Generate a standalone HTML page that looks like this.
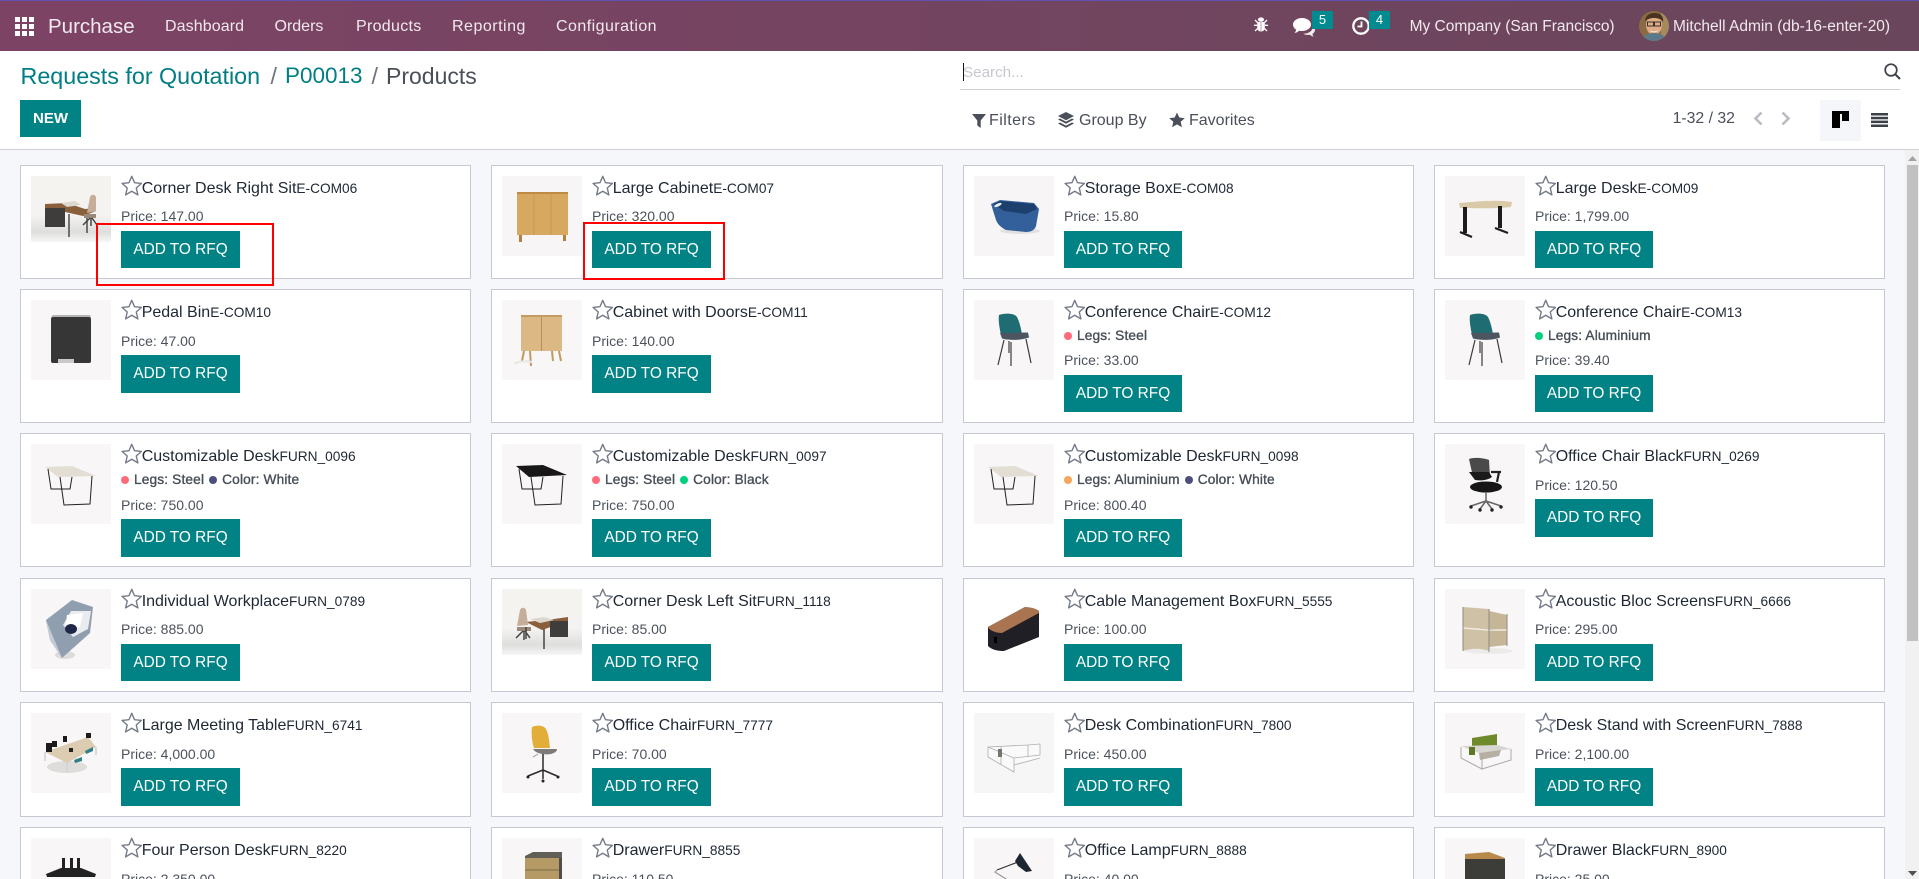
<!DOCTYPE html>
<html lang="en">
<head>
<meta charset="utf-8">
<title>Products</title>
<style>
*{box-sizing:border-box}
html,body{margin:0;padding:0;width:1919px;height:879px;overflow:hidden;background:#f6f7fb;font-family:"Liberation Sans",sans-serif;color:#212529}
#root{position:relative;width:1919px;height:879px;overflow:hidden;background:#f6f7fb}
.a{position:absolute;white-space:nowrap}
#nav{position:absolute;left:0;top:0;width:1919px;height:51px;background:linear-gradient(90deg,#7d4365,#69465b);border-top:1px solid #5f51b3}
.m{position:absolute;top:13px;line-height:26px;font-size:16px;color:#f1e9ee;white-space:nowrap}
.badge{position:absolute;top:11px;height:18px;background:#018a8f;color:#fff;font-size:13px;line-height:17px;text-align:center}
#cp{position:absolute;left:0;top:51px;width:1919px;height:99px;background:#fff;border-bottom:1px solid #cfd0d4}
.f{font-size:16px;color:#4a4f59;line-height:22px;top:110px}
.card{position:absolute;background:#fff;border:1px solid #c6c8d3;overflow:hidden}
.c1{left:20px;width:451px}.c2{left:491px;width:452px}.c3{left:963px;width:451px}.c4{left:1434px;width:451px}
.r1{top:165px;height:114px}.r2{top:289px;height:134px}.r3{top:433px;height:134px}.r4{top:578px;height:114px}.r5{top:702px;height:115px}.r6{top:827px;height:52px;border-bottom:0}
.im{position:absolute;left:10px;top:10px;width:80px;height:80px;display:block}
.st{position:absolute;left:99.5px;top:9px;width:21.5px;height:21.5px}
.t{position:absolute;left:120.7px;top:11px;line-height:24px;font-size:16px;color:#1e2733;white-space:nowrap}
.t small{font-size:13.7px;color:#1e2733}
.p{position:absolute;left:100px;top:41px;line-height:20px;font-size:14px;color:#4c525c;white-space:nowrap}
.r6 .p{height:10px;overflow:hidden}
.r6 .im{height:41px}
.b{position:absolute;left:100px;top:65px;width:119px;height:38px;background:#018284;color:#fff;font-size:15.4px;line-height:38px;text-align:center;white-space:nowrap}
.c3 .b,.c4 .b{width:118px}
.r1 .b,.r4 .b{height:37px;line-height:37px}
.r1 .p,.r4 .p{top:40px}
.tg .p{top:61px}.tg .b{top:85px}
.r2.tg .b{height:37px;line-height:37px}
.r2.tg .p{top:60px}
.l{position:absolute;left:100px;top:36px;line-height:20px;font-size:13.7px;letter-spacing:.15px;color:#474d57;white-space:nowrap;-webkit-text-stroke:.35px #474d57}
.l i{display:inline-block;width:8px;height:8px;border-radius:50%;margin-right:5px;vertical-align:0}
.l span+i{margin-left:5px}
.pk{background:#ff6b7a}.nv{background:#4c4f7a}.gr{background:#00d17e}.or{background:#f5a55c}
.red{position:absolute;border:2px solid #f00;pointer-events:none}
</style>
</head>
<body>
<div id="root">
<svg width="0" height="0" style="position:absolute">
<symbol id="star" viewBox="0 0 20 20"><path d="M10 1.2l2.6 6 6.4.6-4.8 4.3 1.5 6.4L10 15.1 4.3 18.5l1.5-6.4L1 7.8l6.4-.6z" fill="none" stroke="#757a88" stroke-width="1.3" stroke-linejoin="round"/></symbol>
</svg>

<div id="nav">
  <svg class="a" style="left:15px;top:16px" width="19" height="19" viewBox="0 0 19 19" fill="#fff"><rect x="0" y="0" width="5" height="5"/><rect x="7" y="0" width="5" height="5"/><rect x="14" y="0" width="5" height="5"/><rect x="0" y="7" width="5" height="5"/><rect x="7" y="7" width="5" height="5"/><rect x="14" y="7" width="5" height="5"/><rect x="0" y="14" width="5" height="5"/><rect x="7" y="14" width="5" height="5"/><rect x="14" y="14" width="5" height="5"/></svg>
  <div class="m" style="left:48px;font-size:20.5px">Purchase</div>
  <div class="m" style="left:165px;letter-spacing:.1px">Dashboard</div>
  <div class="m" style="left:274.5px">Orders</div>
  <div class="m" style="left:356px;letter-spacing:.3px">Products</div>
  <div class="m" style="left:452px;letter-spacing:.5px">Reporting</div>
  <div class="m" style="left:556px;letter-spacing:.45px">Configuration</div>

  <svg class="a" style="left:1254px;top:16px" width="14" height="15" viewBox="0 0 14 15" fill="#fff"><ellipse cx="7" cy="2.6" rx="3" ry="2.2"/><path d="M3.2 5h7.6v5.5C10.8 13 9 14.6 7 14.6S3.2 13 3.2 10.5z"/><path d="M1 3l2.5 2.5M13 3l-2.5 2.5M0 8.3h3.2M14 8.3h-3.2M1 14l2.6-2.6M13 14l-2.6-2.6" stroke="#fff" stroke-width="1.3" fill="none"/><rect x="6.5" y="5" width="1" height="9.5" fill="#c9a"/></svg>
  <svg class="a" style="left:1293px;top:16px" width="22" height="20" viewBox="0 0 22 20" fill="#fff"><path d="M9 1c5 0 9 2.900 9 6.500S14 14 9 14c-1 0-2-.1-2.900-.3C4.800 15 3 15.800 1.500 16c.9-1 1.500-2.200 1.600-3.400C1.200 11.400 0 9.600 0 7.500 0 3.900 4 1 9 1z"/><path d="M19.500 8.500c1.600 1.100 2.500 2.600 2.500 4.200 0 1.700-1 3.200-2.600 4.300.2 1 .7 1.800 1.300 2.500-1.400-.2-2.800-.8-3.800-1.800-.7.2-1.400.2-2.200.2-1.700 0-3.200-.4-4.500-1.200 5.500.2 10.500-3.200 9.300-8.200z" opacity=".9"/></svg>
  <div class="badge" style="left:1312px;width:21px;top:10px">5</div>
  <svg class="a" style="left:1352px;top:16px" width="18" height="18" viewBox="0 0 18 18"><circle cx="9" cy="9" r="7.700" fill="none" stroke="#fff" stroke-width="2.300"/><path d="M9.500 4.500v5H5.500" fill="none" stroke="#fff" stroke-width="1.800"/></svg>
  <div class="badge" style="left:1369px;width:21px;top:10px">4</div>
  <div class="m" style="left:1409.6px;font-size:15.5px">My Company (San Francisco)</div>
  <svg class="a" style="left:1639px;top:10px" width="30" height="30" viewBox="0 0 30 30"><clipPath id="av"><circle cx="15" cy="15" r="15"/></clipPath><g clip-path="url(#av)"><rect width="30" height="30" fill="#8a6a42"/><rect x="22" y="0" width="8" height="30" fill="#a58a5b"/><ellipse cx="15" cy="14" rx="8" ry="10" fill="#e0ab85"/><path d="M6 10C7 3 12 2 16 2c5 0 9 3 8 9-2-3-5-4-9-4S9 8 6 10z" fill="#4a3420"/><rect x="8.500" y="11" width="6" height="4" fill="none" stroke="#333" stroke-width="1"/><rect x="15.500" y="11" width="6" height="4" fill="none" stroke="#333" stroke-width="1"/><path d="M3 30c1-6 6-8 12-8s11 2 12 8z" fill="#5d7a8a"/><path d="M11 19c2 2 6 2 8 0-1 3-7 3-8 0z" fill="#fff"/></g></svg>
  <div class="m" style="left:1673px;font-size:15.500px">Mitchell Admin (db-16-enter-20)</div>
</div>

<div id="cp"></div>
<div class="a" style="left:20.5px;top:60px;font-size:23.300px;line-height:32px;color:#017e84">Requests for Quotation</div>
<div class="a" style="left:270.5px;top:60px;font-size:23.300px;line-height:32px;color:#6c737d">/</div>
<div class="a" style="left:285px;top:60px;font-size:22.5px;line-height:32px;color:#017e84">P00013</div>
<div class="a" style="left:371.5px;top:60px;font-size:23.300px;line-height:32px;color:#6c737d">/</div>
<div class="a" style="left:386px;top:60px;font-size:23px;line-height:32px;color:#4a4f59">Products</div>
<div class="a" style="left:20px;top:100px;width:61px;height:37px;background:#018284;color:#fff;font-size:15px;font-weight:bold;line-height:37px;text-align:center">NEW</div>

<div class="a" style="left:963px;top:63px;width:1px;height:18px;background:#111"></div>
<div class="a" style="left:963px;top:62px;font-size:15.2px;line-height:22px;color:#c5c8ce">Search...</div>
<div class="a" style="left:960px;top:89px;width:940px;height:1px;background:#cfd0d4"></div>
<svg class="a" style="left:1884px;top:63px" width="17" height="17" viewBox="0 0 17 17"><circle cx="7" cy="7" r="5.800" fill="none" stroke="#3c4048" stroke-width="1.700"/><path d="M11 11l5 5" stroke="#3c4048" stroke-width="2"/></svg>

<svg class="a" style="left:972px;top:113px" width="14" height="15" viewBox="0 0 14 15" fill="#4a4f59"><path d="M0 1h14L8.700 7.500V15L5.300 12.500V7.500z"/></svg>
<div class="a f" style="left:989px;letter-spacing:.45px">Filters</div>
<svg class="a" style="left:1058px;top:112px" width="16" height="17" viewBox="0 0 16 17" fill="#4a4f59"><path d="M8 0l8 4-8 4.200L0 4z"/><path d="M0 7.500l2-1 6 3.100 6-3.100 2 1-8 4.200zM0 11.500l2-1 6 3.100 6-3.100 2 1L8 15.700z"/></svg>
<div class="a f" style="left:1079px">Group By</div>
<svg class="a" style="left:1169px;top:112px" width="16" height="16" viewBox="0 0 16 16" fill="#4a4f59"><path d="M8 .5l2.300 5 5.500.6-4.100 3.700 1.200 5.400L8 12.400 3.100 15.200l1.200-5.400L.2 6.100l5.500-.6z"/></svg>
<div class="a f" style="left:1189px">Favorites</div>

<div class="a" style="left:1672.600px;top:108px;font-size:15.8px;line-height:22px;color:#4a4f59">1-32 / 32</div>
<svg class="a" style="left:1753px;top:111px" width="10" height="15" viewBox="0 0 10 15"><path d="M8.500 1.500L2.500 7.500l6 6" fill="none" stroke="#b9bcc2" stroke-width="2.600"/></svg>
<svg class="a" style="left:1781px;top:111px" width="10" height="15" viewBox="0 0 10 15"><path d="M1.500 1.500l6 6-6 6" fill="none" stroke="#b9bcc2" stroke-width="2.600"/></svg>
<div class="a" style="left:1820px;top:100px;width:41px;height:41px;background:#f5f6fa"></div>
<svg class="a" style="left:1832px;top:111px" width="17" height="17" viewBox="0 0 17 17" fill="#000"><rect width="17" height="3"/><rect y="3" width="8" height="14"/><rect x="10" y="3" width="7" height="7"/></svg>
<svg class="a" style="left:1871px;top:113px" width="17" height="14" viewBox="0 0 17 14" fill="#3c4048"><rect width="17" height="2.500"/><rect y="3.800" width="17" height="2.500"/><rect y="7.600" width="17" height="2.500"/><rect y="11.500" width="17" height="2.500"/></svg>

<!-- scrollbar -->
<div class="a" style="left:1905px;top:150px;width:14px;height:729px;background:#f1f1f1"></div>
<div class="a" style="left:1907px;top:165px;width:11px;height:476px;background:#c1c1c1"></div>
<svg class="a" style="left:1907px;top:155px" width="11" height="7" viewBox="0 0 11 7"><path d="M5.500 1L10 6H1z" fill="#a3a3a3"/></svg>
<svg class="a" style="left:1907px;top:870px" width="11" height="7" viewBox="0 0 11 7"><path d="M5.500 6L10 1H1z" fill="#505050"/></svg>

<!-- ROW 1 -->
<div class="card c1 r1">
<svg class="im" style="height:66px" viewBox="0 0 80 66"><defs><linearGradient id="g1" x1="0" y1="0" x2="0" y2="1"><stop offset="0" stop-color="#f4f3f0"/><stop offset=".6" stop-color="#f4f3f1"/><stop offset=".85" stop-color="#dededc"/><stop offset="1" stop-color="#f7f7f7"/></linearGradient></defs><rect width="80" height="66" fill="url(#g1)"/><path d="M14 28l22-1 18 6 11-1v3L52 40 34 36 14 32z" fill="#8a5f3c"/><rect x="14" y="32" width="20" height="19" fill="#3f3d3b"/><path d="M38 38v23M56 38v19" stroke="#4a4a4a" stroke-width="1.500"/><path d="M56 37l3-16c1-3 5-3 6 0v14z" fill="#c4ad99"/><path d="M53 38h12v4H53z" fill="#9a8878"/><path d="M59 42l-7 7M61 42l5 7M60 42v8" stroke="#444" stroke-width="1.500"/><path d="M30 27l14-2 6 4-14 2z" fill="#dcd8d0"/></svg>
<svg class="st"><use href="#star"/></svg>
<div class="t">Corner Desk Right Sit<small>E-COM06</small></div><div class="p">Price: 147.00</div><div class="b">ADD TO RFQ</div></div>

<div class="card c2 r1">
<svg class="im" viewBox="0 0 80 80"><rect width="80" height="80" fill="#f7f5f5"/><path d="M15 16h51v43H15z" fill="#d6a860"/><path d="M32 17v42M49 17v42" stroke="#c39350" stroke-width=".8"/><path d="M15 16h51v2H15z" fill="#bf8a45"/><path d="M17 59h3v7h-3zM61 59h3v6h-3z" fill="#b4803e"/></svg>
<svg class="st"><use href="#star"/></svg>
<div class="t">Large Cabinet<small>E-COM07</small></div><div class="p">Price: 320.00</div><div class="b">ADD TO RFQ</div></div>

<div class="card c3 r1">
<svg class="im" viewBox="0 0 80 80"><rect width="80" height="80" fill="#f7f5f5"/><ellipse cx="46" cy="55" rx="20" ry="3" fill="#e2e0e0"/><path d="M17 28l9-4 34 3 5 6-3 17q-2 6-10 6l-20-2q-8-4-10-10z" fill="#33609a"/><path d="M19 28l8-3 33 3 3 5-11 5-22-3z" fill="#1c3f6e"/><ellipse cx="24" cy="29" rx="4" ry="1.500" fill="#e9edf3" transform="rotate(-25 24 29)"/></svg>
<svg class="st"><use href="#star"/></svg>
<div class="t">Storage Box<small>E-COM08</small></div><div class="p">Price: 15.80</div><div class="b">ADD TO RFQ</div></div>

<div class="card c4 r1">
<svg class="im" viewBox="0 0 80 80"><rect width="80" height="80" fill="#f7f5f5"/><path d="M14 27c14-1 38-4 53-1l-1 5c-17 2-36 1-51 1z" fill="#d9c9a8"/><path d="M18 31h4v26h-4zM53 30h4v22h-4z" fill="#1d1d1d"/><path d="M15 56l12 5M50 52l13 5" stroke="#1d1d1d" stroke-width="2.200"/></svg>
<svg class="st"><use href="#star"/></svg>
<div class="t">Large Desk<small>E-COM09</small></div><div class="p">Price: 1,799.00</div><div class="b">ADD TO RFQ</div></div>

<!-- ROW 2 -->
<div class="card c1 r2">
<svg class="im" viewBox="0 0 80 80"><rect width="80" height="80" fill="#f8f6f6"/><rect x="20" y="17" width="40" height="46" rx="2" fill="#363636"/><path d="M20 17l2-2h37l1 2z" fill="#b5b5b5"/><rect x="27" y="59" width="16" height="4" fill="#c9c9c9"/></svg>
<svg class="st"><use href="#star"/></svg>
<div class="t">Pedal Bin<small>E-COM10</small></div><div class="p">Price: 47.00</div><div class="b">ADD TO RFQ</div></div>

<div class="card c2 r2">
<svg class="im" viewBox="0 0 80 80"><rect width="80" height="80" fill="#f8f6f6"/><rect x="19" y="15" width="41" height="36" fill="#dcb884"/><path d="M39.500 15v36" stroke="#a98553" stroke-width=".8"/><rect x="19" y="15" width="41" height="2" fill="#c49c63"/><path d="M22 51l-2 10M28 51l1 15M50 51l1 10M57 51l2 10" stroke="#c19a62" stroke-width="2"/><path d="M12 64c5-3 12-3 18-2" stroke="#e9e6e6" stroke-width="2" fill="none"/></svg>
<svg class="st"><use href="#star"/></svg>
<div class="t">Cabinet with Doors<small>E-COM11</small></div><div class="p">Price: 140.00</div><div class="b">ADD TO RFQ</div></div>

<div class="card c3 r2 tg">
<svg class="im" viewBox="0 0 80 80"><rect width="80" height="80" fill="#f8f6f6"/><path d="M25 15c6-2 15-2 18 2 3 6 4 12 5 17l-21 1c-1-5-3-14-2-20z" fill="#1f6d72"/><path d="M26 33l28-.500 1 5c-8 3-20 3-27 1z" fill="#4c5560"/><path d="M30 40l-6 25M52 39l5 24M37 42l0 24M35 41l0 12" stroke="#3b3b3b" stroke-width="1.200" fill="none"/></svg>
<svg class="st"><use href="#star"/></svg>
<div class="t">Conference Chair<small>E-COM12</small></div><div class="l"><i class="pk"></i><span>Legs: Steel</span></div><div class="p">Price: 33.00</div><div class="b">ADD TO RFQ</div></div>

<div class="card c4 r2 tg">
<svg class="im" viewBox="0 0 80 80"><rect width="80" height="80" fill="#f8f6f6"/><path d="M25 15c6-2 15-2 18 2 3 6 4 12 5 17l-21 1c-1-5-3-14-2-20z" fill="#1f6d72"/><path d="M26 33l28-.500 1 5c-8 3-20 3-27 1z" fill="#4c5560"/><path d="M30 40l-6 25M52 39l5 24M37 42l0 24M35 41l0 12" stroke="#3b3b3b" stroke-width="1.200" fill="none"/></svg>
<svg class="st"><use href="#star"/></svg>
<div class="t">Conference Chair<small>E-COM13</small></div><div class="l"><i class="gr"></i><span>Legs: Aluminium</span></div><div class="p">Price: 39.40</div><div class="b">ADD TO RFQ</div></div>

<!-- ROW 3 -->
<div class="card c1 r3 tg">
<svg class="im" viewBox="0 0 80 80"><rect width="80" height="80" fill="#f8f6f6"/><path d="M14 23l27-1 24 10-38 1z" fill="#e3ded4"/><path d="M17 25l3 20h19l2-12M29 33l4 28 26-1 2-28" fill="none" stroke="#222" stroke-width="1"/></svg>
<svg class="st"><use href="#star"/></svg>
<div class="t">Customizable Desk<small>FURN_0096</small></div><div class="l"><i class="pk"></i><span>Legs: Steel</span><i class="nv"></i><span>Color: White</span></div><div class="p">Price: 750.00</div><div class="b">ADD TO RFQ</div></div>

<div class="card c2 r3 tg">
<svg class="im" viewBox="0 0 80 80"><rect width="80" height="80" fill="#f8f6f6"/><path d="M14 22l27-1 24 10-38 2z" fill="#181818"/><path d="M17 25l3 20h19l2-12M29 33l4 28 26-1 2-28" fill="none" stroke="#222" stroke-width="1"/></svg>
<svg class="st"><use href="#star"/></svg>
<div class="t">Customizable Desk<small>FURN_0097</small></div><div class="l"><i class="pk"></i><span>Legs: Steel</span><i class="gr"></i><span>Color: Black</span></div><div class="p">Price: 750.00</div><div class="b">ADD TO RFQ</div></div>

<div class="card c3 r3 tg">
<svg class="im" viewBox="0 0 80 80"><rect width="80" height="80" fill="#f8f6f6"/><path d="M14 23l27-1 24 10-38 1z" fill="#e3ded4"/><path d="M17 25l3 20h19l2-12M29 33l4 28 26-1 2-28" fill="none" stroke="#222" stroke-width="1"/></svg>
<svg class="st"><use href="#star"/></svg>
<div class="t">Customizable Desk<small>FURN_0098</small></div><div class="l"><i class="or"></i><span>Legs: Aluminium</span><i class="nv"></i><span>Color: White</span></div><div class="p">Price: 800.40</div><div class="b">ADD TO RFQ</div></div>

<div class="card c4 r3">
<svg class="im" viewBox="0 0 80 80"><rect width="80" height="80" fill="#f8f6f6"/><path d="M24 15c5-2 15-1 20 1l1 17H28z" fill="#4a4a4a"/><path d="M24 28h20l3 5c-4 3-10 4-17 3z" fill="#1a1a1a"/><path d="M46 28h10M54 28l-2 10" stroke="#222" stroke-width="2.200"/><ellipse cx="41" cy="43" rx="16" ry="5.500" fill="#161616"/><path d="M41 48v9M41 57L26 62M41 57l15 5M41 57l-6 8M41 57l6 8" stroke="#666" stroke-width="1.500"/><circle cx="26" cy="63" r="1.700" fill="#222"/><circle cx="56" cy="63" r="1.700" fill="#222"/><circle cx="35" cy="66" r="1.700" fill="#222"/><circle cx="47" cy="66" r="1.700" fill="#222"/></svg>
<svg class="st"><use href="#star"/></svg>
<div class="t">Office Chair Black<small>FURN_0269</small></div><div class="p">Price: 120.50</div><div class="b">ADD TO RFQ</div></div>

<!-- ROW 4 -->
<div class="card c1 r4">
<svg class="im" viewBox="0 0 80 80"><rect width="80" height="80" fill="#f8f6f6"/><ellipse cx="34" cy="66" rx="10" ry="4" fill="#dddcdb"/><path d="M15 31L41 11l21 7-3 26-28 25-12-18z" fill="#8f9fb0"/><path d="M32 36l8-14 20 0-3 18-15 8z" fill="#e9ebee"/><path d="M36 26l16-2-3 14-15 3z" fill="#fff"/><ellipse cx="40" cy="40" rx="6" ry="5" fill="#1f2747"/><path d="M15 31l16 38-12-18z" fill="#c4cbd3"/></svg>
<svg class="st"><use href="#star"/></svg>
<div class="t">Individual Workplace<small>FURN_0789</small></div><div class="p">Price: 885.00</div><div class="b">ADD TO RFQ</div></div>

<div class="card c2 r4">
<svg class="im" style="height:66px" viewBox="0 0 80 66"><defs><linearGradient id="g2" x1="0" y1="0" x2="0" y2="1"><stop offset="0" stop-color="#f4f3f0"/><stop offset=".6" stop-color="#f4f3f1"/><stop offset=".85" stop-color="#dededc"/><stop offset="1" stop-color="#f7f7f7"/></linearGradient></defs><rect width="80" height="66" fill="url(#g2)"/><path d="M24 33l28-3 14-2 0 4-26 9z" fill="#8a5f3c"/><path d="M48 32h18v16H48z" fill="#3f3d3b"/><path d="M15 37l3-16c1-3 5-3 6 0l2 15z" fill="#c4ad99"/><path d="M15 38h14v4H15z" fill="#9a8878"/><path d="M21 42l-7 7M23 42l5 7M22 42v9M42 40v20M24 38v12" stroke="#444" stroke-width="1.500"/><path d="M28 30l14-2 10 3-14 3z" fill="#dcd8d0"/></svg>
<svg class="st"><use href="#star"/></svg>
<div class="t">Corner Desk Left Sit<small>FURN_1118</small></div><div class="p">Price: 85.00</div><div class="b">ADD TO RFQ</div></div>

<div class="card c3 r4">
<svg class="im" viewBox="0 0 80 80"><rect width="80" height="80" fill="#fff"/><path d="M14 38L51 18l14 4v26L30 62c-6 0-12-1-16-5z" fill="#1f1f25"/><path d="M14 38L51 18c6 0 12 2 14 4v2L28 44c-7 0-13-3-14-6z" fill="#a9744f"/><rect x="20" y="48" width="3" height="6" fill="#000"/></svg>
<svg class="st"><use href="#star"/></svg>
<div class="t">Cable Management Box<small>FURN_5555</small></div><div class="p">Price: 100.00</div><div class="b">ADD TO RFQ</div></div>

<div class="card c4 r4">
<svg class="im" viewBox="0 0 80 80"><rect width="80" height="80" fill="#f8f6f6"/><ellipse cx="44" cy="62" rx="24" ry="3" fill="#ecebea"/><path d="M18 18l26 2v42c-8-3-17-3-26 0z" fill="#cfc1a6"/><path d="M44 22l18 4v30l-18 2z" fill="#c5b697"/><path d="M18 39l26 2 18 0" stroke="#f1ebdf" stroke-width="1.500"/><path d="M18 18v44M44 20v43M62 25v32" stroke="#8f8a80" stroke-width="1"/></svg>
<svg class="st"><use href="#star"/></svg>
<div class="t">Acoustic Bloc Screens<small>FURN_6666</small></div><div class="p">Price: 295.00</div><div class="b">ADD TO RFQ</div></div>

<!-- ROW 5 -->
<div class="card c1 r5">
<svg class="im" viewBox="0 0 80 80"><rect width="80" height="80" fill="#f8f6f6"/><ellipse cx="36" cy="54" rx="20" ry="6" fill="#dfdddb"/><path d="M14 39l43-15 8 10-29 16z" fill="#dccdb2"/><path d="M36 50v9M14 39v9M65 34v8" stroke="#d2d2d2" stroke-width="1.500"/><path d="M15 30h6v9h-6zM21 28h5v6h-5zM32 23h4v6h-4zM55 20h5v5h-5z" fill="#1c1c1c"/><path d="M43 47l8-3v4l-7 2zM54 38l8-4v4l-7 3z" fill="#2f7f86"/><rect x="38" y="35" width="4" height="4" fill="#222"/></svg>
<svg class="st"><use href="#star"/></svg>
<div class="t">Large Meeting Table<small>FURN_6741</small></div><div class="p">Price: 4,000.00</div><div class="b">ADD TO RFQ</div></div>

<div class="card c2 r5">
<svg class="im" viewBox="0 0 80 80"><rect width="80" height="80" fill="#f8f6f6"/><path d="M30 14c5-2 11-2 14 2 3 6 3 12 4 19H32c-2-6-3-15-2-21z" fill="#e3ad3a"/><path d="M31 36h24c0 3-3 4-6 5-6 1-15 0-18-5z" fill="#7d7a78"/><path d="M41 41v25M41 57L26 63M41 57l14 6M41 57v9" stroke="#2b2b2b" stroke-width="1.500"/><circle cx="26" cy="64" r="1.500" fill="#222"/><circle cx="56" cy="64" r="1.500" fill="#222"/><circle cx="41" cy="68" r="1.500" fill="#222"/><path d="M36 41l-5 3" stroke="#999"/></svg>
<svg class="st"><use href="#star"/></svg>
<div class="t">Office Chair<small>FURN_7777</small></div><div class="p">Price: 70.00</div><div class="b">ADD TO RFQ</div></div>

<div class="card c3 r5">
<svg class="im" viewBox="0 0 80 80"><rect width="80" height="80" fill="#f7f6f6"/><path d="M14 34l34-2 18-1v15L40 50 40 59 14 44z" fill="#fafafa"/><path d="M14 34v10l26 15V45L14 34zM40 45l26-3V31M40 52l26-7M27 33v18M54 32v12M14 34l40-2 12-1" fill="none" stroke="#aeaeae" stroke-width=".8"/><rect x="24" y="36" width="4" height="8" fill="#77736d"/></svg>
<svg class="st"><use href="#star"/></svg>
<div class="t">Desk Combination<small>FURN_7800</small></div><div class="p">Price: 450.00</div><div class="b">ADD TO RFQ</div></div>

<div class="card c4 r5">
<svg class="im" viewBox="0 0 80 80"><rect width="80" height="80" fill="#f8f6f6"/><path d="M27 25l25-4v13H27z" fill="#6f8a2b"/><path d="M16 33l36-1 14 4-32 4z" fill="#d8d6d2"/><path d="M24 34h6v8h-6z" fill="#5d7826"/><path d="M34 40l22-3-2 6-19 4z" fill="#b5afa4"/><path d="M16 34v11l21 11V42M66 36v11l-29 9" fill="none" stroke="#a9a9a9" stroke-width="1"/></svg>
<svg class="st"><use href="#star"/></svg>
<div class="t">Desk Stand with Screen<small>FURN_7888</small></div><div class="p">Price: 2,100.00</div><div class="b">ADD TO RFQ</div></div>

<!-- ROW 6 -->
<div class="card c1 r6">
<svg class="im" viewBox="0 0 80 41"><rect width="80" height="41" fill="#f8f6f6"/><path d="M15 36l15-6h20l15 6-1 3H16z" fill="#222"/><path d="M31 20h3v12h-3zM39 20h3v12h-3zM46 20h3v11h-3z" fill="#222"/></svg>
<svg class="st"><use href="#star"/></svg>
<div class="t">Four Person Desk<small>FURN_8220</small></div><div class="p">Price: 2,350.00</div></div>

<div class="card c2 r6">
<svg class="im" viewBox="0 0 80 41"><rect width="80" height="41" fill="#f8f6f6"/><path d="M23 18l8-4h29v6l-37 1z" fill="#615e58"/><path d="M23 20h34v21H23z" fill="#b69a66"/><path d="M23 32h34" stroke="#7b6a47"/><path d="M57 20h3v21h-3z" fill="#514e49"/></svg>
<svg class="st"><use href="#star"/></svg>
<div class="t">Drawer<small>FURN_8855</small></div><div class="p">Price: 110.50</div></div>

<div class="card c3 r6">
<svg class="im" viewBox="0 0 80 41"><rect width="80" height="41" fill="#f8f6f6"/><path d="M23 32l21-8" stroke="#333" stroke-width="1.200"/><path d="M46 15l12 18-6 1-8-6-3-5z" fill="#1c2731"/><path d="M23 32l-2 2 11 7" stroke="#9a9a9a" stroke-width="1.200" fill="none"/></svg>
<svg class="st"><use href="#star"/></svg>
<div class="t">Office Lamp<small>FURN_8888</small></div><div class="p">Price: 40.00</div></div>

<div class="card c4 r6">
<svg class="im" viewBox="0 0 80 41"><rect width="80" height="41" fill="#f8f6f6"/><path d="M20 16l24-2 16 6v2H20z" fill="#b88a4b"/><rect x="20" y="21" width="40" height="20" fill="#3c3c38"/></svg>
<svg class="st"><use href="#star"/></svg>
<div class="t">Drawer Black<small>FURN_8900</small></div><div class="p">Price: 25.00</div></div>

<div class="red" style="left:95.5px;top:222.5px;width:178.5px;height:63px"></div>
<div class="red" style="left:582.5px;top:222px;width:142px;height:58px"></div>
</div>
</body>
</html>
